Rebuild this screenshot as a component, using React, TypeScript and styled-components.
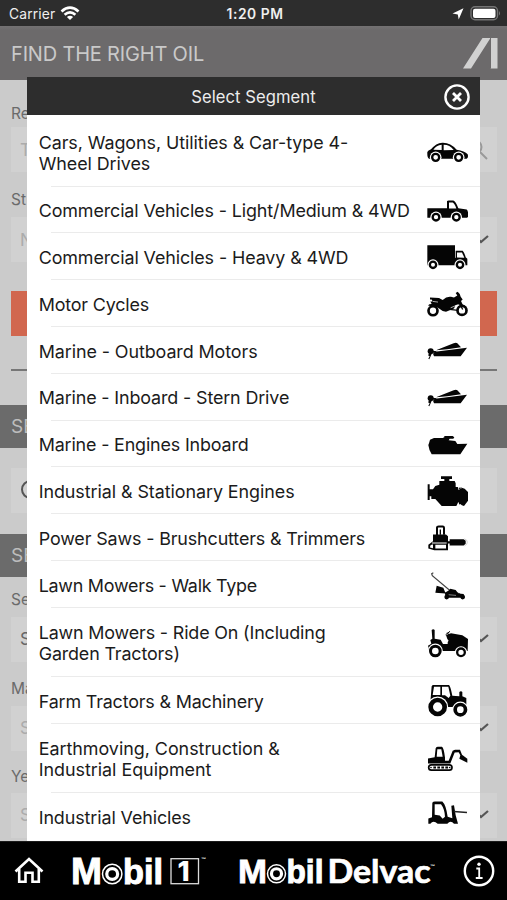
import React from "react";
import styled, { createGlobalStyle } from "styled-components";

const GlobalStyle = createGlobalStyle`
  * { box-sizing: border-box; }
  body { margin: 0; background: #cbcbcb; font-family: Inter, "Liberation Sans", sans-serif; }
`;

const Screen = styled.main`
  position: relative;
  display: grid;
  grid-template-rows: 25.5px 54.5px 761px 59px;
  width: 507px;
  height: 900px;
  overflow: hidden;
  background: #cbcbcb;
`;

const StatusBar = styled.div`
  display: grid;
  grid-template-columns: 1fr auto 1fr;
  align-items: center;
  padding: 2px 6px 0 9px;
  background: #2d2d2d;
  color: #efefef;
  font-size: 13.8px;
  letter-spacing: 0.15px;
`;

const StatusGroup = styled.div<{ $end?: boolean }>`
  display: flex;
  align-items: center;
  gap: ${(p) => (p.$end ? 6 : 5)}px;
  justify-content: ${(p) => (p.$end ? "flex-end" : "flex-start")};
`;

const Clock = styled.span`
  font-weight: 600;
  font-size: 13.8px;
  letter-spacing: 0.55px;
`;

const AppHeader = styled.header`
  display: flex;
  align-items: center;
  justify-content: space-between;
  padding: 0 9px 0 11px;
  background: linear-gradient(#747273, #6c6a6b 8%);
  color: #c9c9c9;
`;

const AppTitle = styled.h1`
  margin: 0;
  padding-top: 2px;
  font-size: 20px;
  font-weight: 400;
  letter-spacing: -0.18px;
`;

const Form = styled.section`
  display: flex;
  flex-direction: column;
  overflow: hidden;
`;

const Label = styled.label<{ $top: number }>`
  height: 20px;
  margin: ${(p) => p.$top}px 11px 0;
  font-size: 15.5px;
  line-height: 20px;
  color: #6a6a6a;
`;

const Field = styled.div<{ $top: number; $dark?: boolean }>`
  display: flex;
  align-items: center;
  justify-content: space-between;
  flex: none;
  height: 45px;
  margin: ${(p) => p.$top}px 10px 0 11px;
  padding: 0 8px 0 9px;
  background: #d1d1d1;
  color: ${(p) => (p.$dark ? "#666" : "#ababab")};
  font-size: 17px;
`;

const SearchButton = styled.div`
  flex: none;
  height: 45px;
  margin: 28.5px 10px 0 11px;
  background: #d1674f;
`;

const Rule = styled.hr`
  flex: none;
  width: 486px;
  height: 2px;
  margin: 33.5px 10px 0 11px;
  border: 0;
  background: #777;
`;

const SectionBar = styled.h2<{ $top: number }>`
  flex: none;
  height: 43px;
  margin: ${(p) => p.$top}px 0 0;
  padding-left: 11px;
  background: #6b6b6b;
  color: #bdbdbd;
  font-size: 19px;
  font-weight: 400;
  line-height: 44px;
`;

const Dialog = styled.div`
  position: absolute;
  left: 26.7px;
  top: 77px;
  width: 453.5px;
  height: 764px;
  overflow: hidden;
  background: #fff;
`;

const DialogHeader = styled.div`
  display: grid;
  grid-template-columns: 43px 1fr 40px;
  align-items: center;
  justify-items: center;
  height: 38.3px;
  padding: 1px 3px 0 0;
  background: #2d2d2d;
  color: #ececec;
  font-size: 16.6px;
  letter-spacing: 0.06px;
`;

const SegmentList = styled.ul`
  margin: 0;
  padding: 0;
  list-style: none;
`;

const SegmentRow = styled.li<{ $height: number }>`
  display: flex;
  align-items: center;
  justify-content: space-between;
  height: ${(p) => p.$height}px;
  padding: 0 12px;
  background: linear-gradient(#ebebeb, #ebebeb) 24px 100% / 100% 1px no-repeat;
`;

const SegmentName = styled.span<{ $spacing: number; $drop: number }>`
  padding-top: ${(p) => p.$drop}px;
  font-size: 17.9px;
  line-height: 21.6px;
  letter-spacing: ${(p) => p.$spacing}px;
  white-space: pre;
  color: #1b1b1b;
`;

const Glyph = styled.svg`
  flex: none;
  display: block;
  width: 42px;
  height: 40px;
  margin-top: 1px;
  fill: #050505;
  stroke: none;
`;

const Footer = styled.footer`
  display: flex;
  align-items: center;
  background: #000;
  border-top: 1px solid #1c1c1c;
`;

const Plain = styled.svg`
  display: block;
  flex: none;
`;

const Wheel = ({ x, y, r = 12, w = 6 }: { x: number; y: number; r?: number; w?: number }) => (
  <>
    <circle cx={x} cy={y} r={r + 3.5} fill="#fff" />
    <circle cx={x} cy={y} r={r - w / 2} fill="#fff" stroke="#050505" strokeWidth={w} />
  </>
);

const Boat = ({ dy = 0 }: { dy?: number }) => (
  <g transform={`translate(0 ${dy})`}>
    <path d="M78 240L131 219Q138 216 142 219L153 231L112 237ZM75 244L171 232L152 258H72L69 250Z" />
    <circle cx="62" cy="243" r="9" />
    <path d="M58 249L65 250L62 258L58 267L55 265L59 258L54 255ZM68 241L80 243L76 247L68 247Z" />
  </g>
);

type Segment = { name: string; h: number; y: number; ls: number; icon: React.ReactNode };

const segments: Segment[] = [
  {
    name: "Cars, Wagons, Utilities & Car-type 4-\nWheel Drives", h: 71.4, y: 33, ls: -0.06,
    icon: (
      <>
        <path d="M52 96Q54 91 63 88Q78 69 97 68Q121 67 140 89Q164 92 173 103Q176 113 170 116H57Q51 113 52 96Z" />
        <path d="M70 89Q79 76 95 74V90ZM101 74Q120 74 131 90L101 91Z" fill="#fff" />
        <Wheel x={77} y={112} r={14} w={7} /><Wheel x={146} y={112} r={14} w={7} />
      </>
    ),
  },
  {
    name: "Commercial Vehicles - Light/Medium & 4WD", h: 46.8, y: 210.6, ls: -0.11,
    icon: (
      <>
        <path d="M52 262H111V241Q112 239 116 239H130Q137 241 145 262L170 266Q175 270 175 287Q173 291 166 291H52Z" />
        <path d="M117 245H128Q134 248 139 263H117Z" fill="#fff" />
        <Wheel x={78} y={289} r={13.5} w={7} /><Wheel x={139} y={289} r={13.5} w={7} />
      </>
    ),
  },
  {
    name: "Commercial Vehicles - Heavy & 4WD", h: 46.8, y: 351.6, ls: -0.1,
    icon: (
      <>
        <path d="M52 376H135V393H158Q163 397 167 412L172 417V436H52Z" />
        <path d="M136.5 376V414" stroke="#fff" strokeWidth="2" />
        <path d="M141 398H156L163 414L141 413Z" fill="#fff" />
        <Wheel x={69} y={435} r={13} w={7} /><Wheel x={150} y={435} r={13} w={7} />
      </>
    ),
  },
  {
    name: "Motor Cycles", h: 46.8, y: 41.7, ls: -0.16,
    icon: (
      <>
        <circle cx="69" cy="122" r="13.5" fill="#fff" stroke="#050505" strokeWidth="8" />
        <circle cx="156" cy="121" r="13.5" fill="#fff" stroke="#050505" strokeWidth="8" />
        <path d="M60 82L87 84L98 90Q110 78 123 80L132 82L142 76L137 69L143 65Q151 71 152 80L158 88L153 93L158 103L171 111L150 104L137 105L132 115L108 125L98 123L83 112L68 109L54 106Q57 102 65 102L61 94H68L65 88L60 88Z" />
        <path d="M119 118L144 121M143 87L158 118" stroke="#050505" strokeWidth="4" />
        <path d="M122 113L146 103M69 94L84 96" stroke="#fff" strokeWidth="2" />
      </>
    ),
  },
  { name: "Marine - Outboard Motors", h: 46.8, y: 182, ls: -0.08, icon: <Boat /> },
  { name: "Marine - Inboard - Stern Drive", h: 46.8, y: 322.5, ls: -0.13, icon: <Boat dy={140.5} /> },
  {
    name: "Marine - Engines Inboard", h: 46.8, y: 13, ls: -0.16,
    icon: <path d="M57 68L60 57L72 52H98L103 50V46H128L133 50L130 54H119L116 59L136 61L142 70L172 69L151 101H65Q57 89 55 73Z" />,
  },
  {
    name: "Industrial & Stationary Engines", h: 46.8, y: 153, ls: -0.06,
    icon: (
      <>
        <path d="M93 169H126V177H118V183H134L137 190V201H145V205L151 202L164 206L174 216V242L162 258L147 253L145 246L139 258H95L76 237H64V229H59V240H53V193H59V208H69L76 198L88 194V183H103V177H93Z" />
        <path d="M145 201L147 210M145 248L147 256M151 202L153 206M151 252L154 257" stroke="#fff" strokeWidth="2.5" />
      </>
    ),
  },
  {
    name: "Power Saws - Brushcutters & Trimmers", h: 46.8, y: 293.4, ls: -0.13,
    icon: (
      <>
        <path d="M81 345V322Q81 319 86 319H98Q102 319 102 324V344" fill="none" stroke="#050505" strokeWidth="6" />
        <path d="M91 328V344" stroke="#050505" strokeWidth="4" />
        <path d="M69 343H108L114 348V390H73L55 385V374L69 363Z" />
        <path d="M66 367H110V370H66ZM61 376Q65 372 69 373V384L60 382ZM76 374H108V385H76Z" fill="#fff" />
        <path d="M114 363H120V370H114ZM119 357H161L167 362V371L161 376H119Z" />
        <path d="M163 356Q172 358 172 366Q172 374 163 377" fill="none" stroke="#bbb" strokeWidth="2" />
      </>
    ),
  },
  {
    name: "Lawn Mowers - Walk Type", h: 46.8, y: 13.8, ls: -0.25,
    icon: (
      <>
        <path d="M70 37L65 40L67 46L117 88L150 101" fill="none" stroke="#444" strokeWidth="3.6" />
        <path d="M80 76L100 82L107 99L76 97ZM104 97L115 91L121 85L137 89L145 99L161 101L164 112H108Z" />
        <path d="M116 103L138 105" stroke="#fff" strokeWidth="1.5" />
        <circle cx="110" cy="110" r="7" /><circle cx="158" cy="110" r="7" />
      </>
    ),
  },
  {
    name: "Lawn Mowers - Ride On (Including\nGarden Tractors)", h: 69.1, y: 188, ls: -0.15,
    icon: (
      <>
        <path d="M65 209Q70 205 74 209V235L92 238L99 251H113V239L108 224L123 219L157 225L174 236L173 272H55Q58 263 54 256L64 250L61 239L67 235Z" />
        <path d="M107 223L120 213M112 217L118 225" stroke="#050505" strokeWidth="3" />
        <path d="M104 229L116 241L112 246H106Z" fill="#fff" />
        <Wheel x={76} y={272} r={19} w={9} /><Wheel x={153} y={276} r={15} w={7} />
      </>
    ),
  },
  {
    name: "Farm Tractors & Machinery", h: 46.8, y: 362, ls: -0.16,
    icon: (
      <>
        <path d="M62 414L65 378Q66 374 71 374H117Q121 376 127 406L148 408V395Q153 390 157 395V408L169 413V440H59Z" />
        <path d="M72 379H91V404H68ZM96 379H115L121 406L116 413L105 405H96Z" fill="#fff" />
        <Wheel x={83} y={440} r={28} w={14} /><Wheel x={151} y={448} r={21} w={11} />
      </>
    ),
  },
  {
    name: "Earthmoving, Construction &\nIndustrial Equipment", h: 69.1, y: 115.5, ls: -0.02,
    icon: (
      <>
        <path d="M54 174L74 170L77 143Q79 139 84 139H96Q101 141 105 171V181H116L128 151L135 148H150L156 163L172 175V187L148 175L151 164L146 155L134 156L121 189H54Z" />
        <path d="M82 146H94L98 169H80Z" fill="#fff" />
        <rect x="56" y="193" width="70" height="16" rx="8" fill="#fff" stroke="#050505" strokeWidth="5" />
        <path d="M70 201H114" stroke="#050505" strokeWidth="6" strokeDasharray="8 4" />
        <circle cx="63" cy="201" r="2.5" /><circle cx="119" cy="201" r="2.5" />
      </>
    ),
  },
  {
    name: "Industrial Vehicles", h: 49, y: 293.6, ls: -0.1,
    icon: (
      <>
        <path d="M55 371V355L66 351L67 308Q69 304 75 304H97Q108 314 113 350L127 354L124 317L132 315L137 345L144 371H132Q122 359 112 371H83Q70 358 61 371Z" />
        <path d="M74 312H93Q104 326 105 350L98 356L89 346L74 344Z" fill="#fff" />
        <path d="M131 334L171 337" stroke="#222" strokeWidth="4" />
      </>
    ),
  },
];

const Chevron = () => (
  <Plain width="14" height="10" viewBox="0 0 14 10" fill="none" stroke="#555" strokeWidth="2.2"><path d="M1 2L6 7L13 1" /></Plain>
);

const Ring = ({ x, y, r }: { x: number; y: number; r: number }) => (
  <g fill="none" stroke="#fff">
    <circle cx={x} cy={y} r={r} strokeWidth="1.5" />
    <circle cx={x} cy={y} r={r * 0.56} strokeWidth="3.2" />
  </g>
);

const LogoFont = styled.g`
  font-family: "Liberation Sans", sans-serif;
  font-weight: 700;
  fill: #fff;
`;

const GeometricText = styled.text`
  font-family: Lato, sans-serif;
  font-weight: 700;
`;

const BoxedDigit = styled.text`
  font-family: Inter, sans-serif;
  font-weight: 800;
`;

export default function App() {
  return (
    <>
      <GlobalStyle />
      <Screen>
        <StatusBar>
          <StatusGroup>
            <span>Carrier</span>
            <Plain width="20" height="15" viewBox="0 0 20 15" fill="none" stroke="#fff" strokeWidth="2.7">
              <path d="M1.5 5.4Q10-2.2 18.5 5.4M4.6 8.7Q10 4 15.4 8.7" />
              <path d="M10 14L6.9 10.9Q10 8.4 13.1 10.9Z" fill="#fff" stroke="none" />
            </Plain>
          </StatusGroup>
          <Clock>1:20 PM</Clock>
          <StatusGroup $end>
            <Plain width="12" height="12" viewBox="0 0 12 12" fill="#fff"><path d="M11.5.3L6.7 11.4L5.8 6.4L.5 5.5Z" /></Plain>
            <Plain width="31" height="15" viewBox="0 0 31 15">
              <rect x="1" y=".8" width="26.5" height="13" rx="4" fill="none" stroke="#747474" strokeWidth="1.4" />
              <rect x="3" y="2.7" width="22.5" height="9.2" rx="2" fill="#fff" />
              <path d="M29 5Q31 7.3 29 9.6Z" fill="#777" />
            </Plain>
          </StatusGroup>
        </StatusBar>

        <AppHeader>
          <AppTitle>FIND THE RIGHT OIL</AppTitle>
          <Plain width="36" height="32" viewBox="0 0 36 32" fill="#d1d1d1">
            <path d="M1 31.5L20.5 1H28.5L9 31.5ZM28.5 1H35.5V31.5H28.5Z" />
            <path d="M28.5 1V31.5" stroke="#6c6a6b" />
          </Plain>
        </AppHeader>

        <Form>
          <Label $top={23.5}>Re</Label>
          <Field $top={3.5}>
            <span>T</span>
            <Plain width="22" height="22" viewBox="0 0 22 22" fill="none" stroke="#999" strokeWidth="2"><circle cx="8" cy="8" r="6.5" /><path d="M13 13L20 20" /></Plain>
          </Field>
          <Label $top={17.5}>St</Label>
          <Field $top={7.5}><span>N</span><Chevron /></Field>
          <SearchButton />
          <Rule />
          <SectionBar $top={33.5}>SE</SectionBar>
          <Field $top={20}>
            <Plain width="22" height="22" viewBox="0 0 22 22" fill="none" stroke="#555" strokeWidth="2"><circle cx="10.5" cy="10.5" r="8.5" /><path d="M16 17L21 21" /></Plain>
          </Field>
          <SectionBar $top={21}>SE</SectionBar>
          <Label $top={13}>Se</Label>
          <Field $top={7} $dark><span>S</span><Chevron /></Field>
          <Label $top={17}>Ma</Label>
          <Field $top={7}><span>S</span><Chevron /></Field>
          <Label $top={16}>Ye</Label>
          <Field $top={6}><span>S</span><Chevron /></Field>
        </Form>

        <Footer>
          <Plain width="507" height="58" viewBox="0 842 507 58" fill="none">
            <g stroke="#fff" strokeWidth="2.6">
              <path d="M15.5 871.5L29 859L42.5 871.5M19.2 869V881.8H25.5V872.8H32.5V881.8H38.8V869" />
              <circle cx="479" cy="871" r="14.2" strokeWidth="2.4" />
              <path d="M476.3 868.5H479.2V878M475.8 878H482.6" strokeWidth="1.8" />
            </g>
            <circle cx="479" cy="864.3" r="1.7" fill="#fff" />
            <LogoFont>
              <text x="71" y="884" fontSize="36" textLength="31" lengthAdjust="spacingAndGlyphs" stroke="#fff" strokeWidth=".9">M</text>
              <Ring x={112.2} y={874} r={9.7} />
              <text x="123" y="884" fontSize="35" textLength="40" lengthAdjust="spacingAndGlyphs" stroke="#fff" strokeWidth="1">bil</text>
              <rect x="171" y="858.7" width="27.5" height="25" fill="none" stroke="#ddd" strokeWidth="1.3" />
              <BoxedDigit x="177.5" y="881" fontSize="27.5">1</BoxedDigit>
              <text x="201" y="861" fontSize="5">™</text>
              <text x="238" y="883" fontSize="33.5" textLength="29" lengthAdjust="spacingAndGlyphs" stroke="#fff" strokeWidth=".8">M</text>
              <Ring x={276.5} y={873.8} r={9} />
              <text x="286.5" y="883" fontSize="32.5" textLength="37" lengthAdjust="spacingAndGlyphs" stroke="#fff" strokeWidth=".9">bil</text>
              <GeometricText x="327.5" y="883" fontSize="33" textLength="103" lengthAdjust="spacingAndGlyphs" stroke="#fff" strokeWidth=".7">Delvac</GeometricText>
              <text x="430" y="868" fontSize="5">™</text>
            </LogoFont>
          </Plain>
        </Footer>

        <Dialog>
          <DialogHeader>
            <span />
            <span>Select Segment</span>
            <Plain width="28" height="28" viewBox="0 0 28 28" fill="none" stroke="#fff" strokeWidth="2.4">
              <circle cx="14" cy="14" r="11.6" /><path d="M10 10L18 18M18 10L10 18" strokeWidth="2.8" />
            </Plain>
          </DialogHeader>
          <SegmentList>
            {segments.map((s) => (
              <SegmentRow key={s.name} $height={s.h}>
                <SegmentName $spacing={s.ls} $drop={s.h > 70 ? 5 : s.h === 49 ? 0 : 2}>{s.name}</SegmentName>
                <Glyph viewBox={`48 ${s.y} 126 120`}>{s.icon}</Glyph>
              </SegmentRow>
            ))}
          </SegmentList>
        </Dialog>
      </Screen>
    </>
  );
}
